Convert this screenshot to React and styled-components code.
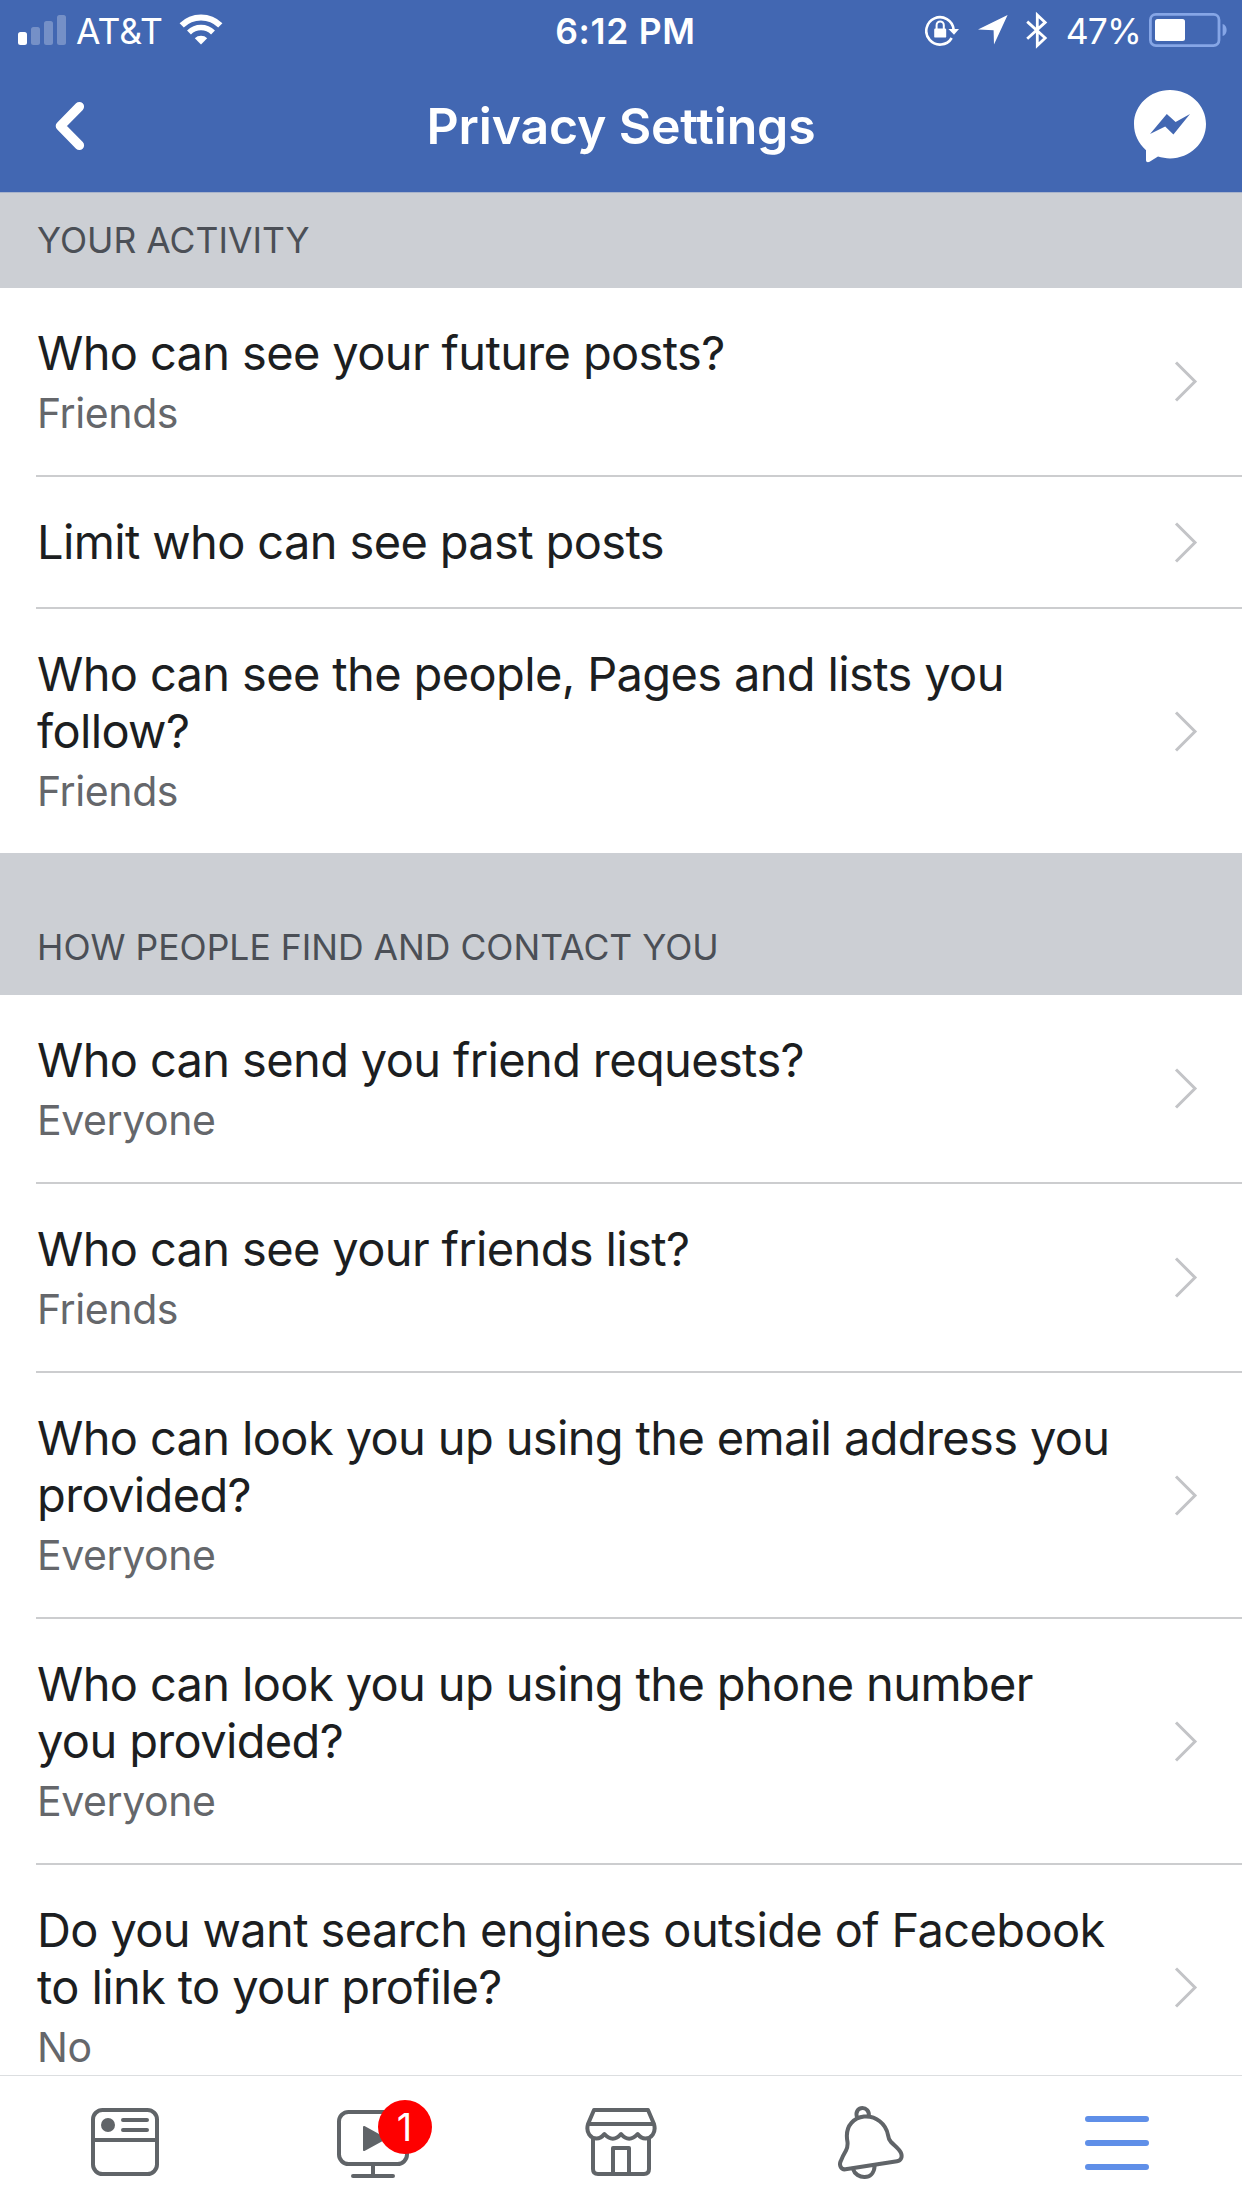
import styled, { createGlobalStyle } from 'styled-components';

const GlobalStyle = createGlobalStyle`
    * {
        box-sizing: border-box;
    }

    body {
        margin: 0;
        background: #fff;
        font-family: Inter, Roboto, sans-serif;
    }
`;

const sections = [
    {
        title: 'YOUR ACTIVITY',
        rows: [
            { title: 'Who can see your future posts?', value: 'Friends' },
            { title: 'Limit who can see past posts' },
            { title: 'Who can see the people, Pages and lists you follow?', value: 'Friends' },
        ],
    },
    {
        title: 'HOW PEOPLE FIND AND CONTACT YOU',
        rows: [
            { title: 'Who can send you friend requests?', value: 'Everyone' },
            { title: 'Who can see your friends list?', value: 'Friends' },
            { title: 'Who can look you up using the email address you provided?', value: 'Everyone' },
            { title: 'Who can look you up using the phone number you provided?', value: 'Everyone' },
            { title: 'Do you want search engines outside of Facebook to link to your profile?', value: 'No' },
        ],
    },
];

const SignalIcon = () => (
    <svg width="50" height="32" viewBox="0 0 50 32" fill="#fff">
        <rect x="1" y="18" width="9" height="13" rx="2.5" />
        <g opacity="0.27">
            <rect x="14" y="13" width="9" height="18" rx="2.5" />
            <rect x="27" y="7" width="9" height="24" rx="2.5" />
            <rect x="40" y="1" width="9" height="30" rx="2.5" />
        </g>
    </svg>
);

const WifiIcon = () => (
    <svg width="44" height="32" viewBox="0 0 44 32" fill="none" stroke="#fff">
        <path d="M2.7 11.3 A27.5 27.5 0 0 1 41.3 11.3" strokeWidth="6" />
        <path d="M10 18.4 A17.3 17.3 0 0 1 34 18.4" strokeWidth="5.6" />
        <path d="M15.8 24.2 A9 9 0 0 1 28.2 24.2 L22 30.6 Z" fill="#fff" stroke="none" />
    </svg>
);

const RotationLockIcon = () => (
    <svg width="35" height="32" viewBox="0 0 35 32" fill="none" stroke="#fff">
        <path d="M26.7 24 A13.7 13.7 0 1 1 28.6 15.5" strokeWidth="2.6" />
        <path d="M23.4 15 H34 L29 20.8 Z" fill="#fff" stroke="none" />
        <rect x="9.2" y="14.6" width="12" height="9" rx="1.2" fill="#fff" stroke="none" />
        <path d="M11.6 15 V11.2 A3.6 3.8 0 0 1 18.8 11.2 V15" strokeWidth="2" />
    </svg>
);

const LocationIcon = () => (
    <svg width="30" height="32" viewBox="0 0 30 32" fill="#fff">
        <path d="M29.6 1 L16 30.6 L15.6 16.2 L0 15.6 Z" />
    </svg>
);

const BluetoothIcon = () => (
    <svg width="22" height="38" viewBox="0 0 22 38" fill="none" stroke="#fff" strokeWidth="2.8">
        <path d="M1.2 10.6 L19.2 27 L11.3 34.4 V4 L19.2 11.4 L1.2 27.8" />
    </svg>
);

const BatteryIcon = () => (
    <svg width="78" height="34" viewBox="0 0 78 34">
        <rect x="1.4" y="1.4" width="68.6" height="31.2" rx="5.5" fill="none" stroke="#86a6e6" strokeWidth="2.8" />
        <rect x="6" y="6" width="30" height="22" rx="2.5" fill="#fff" />
        <path d="M73.6 11 C79 12.4 79 21.6 73.6 23 Z" fill="#86a6e6" />
    </svg>
);

const BackIcon = () => (
    <svg width="30" height="50" viewBox="0 0 30 50" fill="none" stroke="#fff" strokeWidth="9.4" strokeLinecap="round" strokeLinejoin="round">
        <path d="M24.4 5.6 L5.4 25 L24.4 44.4" />
    </svg>
);

const MessengerIcon = () => (
    <svg width="72" height="73" viewBox="0 0 72 73">
        <path d="M36 0 C56 0 72 15 72 34 C72 53 56 68.4 36 68.4 C32 68.4 27.6 67.8 24 66.6 L15.6 71.8 C13.6 72.9 12 72 12 70 V60.2 C4.6 53.6 0 44.6 0 34 C0 15 16 0 36 0 Z" fill="#fff" />
        <path d="M16 44 L32.8 24 L41.6 32 L56 24 L39.4 44.6 L31.2 36.4 Z" fill="#4267b2" />
    </svg>
);

const ChevronIcon = () => (
    <svg width="24" height="42" viewBox="0 0 24 42" fill="none" stroke="#c3c4c7" strokeWidth="3">
        <path d="M2 2.5 L21 21.5 L2 40.5" />
    </svg>
);

const NewsFeedIcon = () => (
    <svg width="68" height="68" viewBox="0 0 68 68" fill="none" stroke="#606468" strokeWidth="4" strokeLinecap="round">
        <rect x="2" y="2" width="64" height="64" rx="9.5" />
        <path d="M2 32 H66 M32 12 H56 M32 22 H56" />
        <circle cx="17" cy="17" r="7" fill="#606468" stroke="none" />
    </svg>
);

const WatchIcon = () => (
    <svg width="72" height="68" viewBox="0 0 72 68" fill="none" stroke="#606468" strokeWidth="4" strokeLinecap="round">
        <rect x="2" y="2" width="68" height="52" rx="9.5" />
        <path d="M36 54 V66 M16 66 H56" />
        <path d="M27 17 L48 28.5 L27 40 Z" fill="#606468" strokeWidth="2" strokeLinejoin="round" />
    </svg>
);

const MarketplaceIcon = () => (
    <svg width="72" height="68" viewBox="0 0 72 68" fill="none" stroke="#606468" strokeWidth="4" strokeLinejoin="round">
        <path d="M9 2 H63 L69 16 C71.5 25 66 30.5 60.5 30.5 Q56 30.5 52.6 26 Q44 35.5 36 26 Q28 35.5 19.4 26 Q16 30.5 11.5 30.5 C6 30.5 0.5 25 3 16 Z" />
        <path d="M3 16 H69" />
        <path d="M8 29 V61 Q8 66 13 66 H59 Q64 66 64 61 V29" />
        <path d="M28 66 V40 H44 V66" />
    </svg>
);

const BellIcon = () => (
    <svg width="66" height="74" viewBox="0 0 66 74" fill="none" stroke="#606468" strokeWidth="4" strokeLinejoin="round">
        <path d="M9.5 36 C6 18 18 11.5 26 10.6 C38 9.5 48 18 50 29 C50.5 33 51 34 53 36 C57 40 61.5 43 63 47 C64.6 51 63 54.5 59 55.2 L7.5 63.3 C3 64 1 59 2.6 55.4 C4 52 6 48 8 44.6 C9.6 41.5 9.8 39 9.5 36 Z" />
        <path d="M19 11.5 C17 5 21 2 24.4 2 C28 2 31.4 5 30.8 9.5" />
        <path d="M15 63 C18 73.4 36 75 36.6 60" />
    </svg>
);

const MenuIcon = () => (
    <svg width="64" height="54" viewBox="0 0 64 54" stroke="#5f8fe8" strokeWidth="6" strokeLinecap="round">
        <path d="M3 3 H61 M3 27 H61 M3 51 H61" />
    </svg>
);

const App = () => {
    return (
        <Screen>
            <GlobalStyle />
            <Header>
                <StatusBar>
                    <StatusGroup>
                        <SignalIcon />
                        <Carrier>AT&amp;T</Carrier>
                        <WifiIcon />
                    </StatusGroup>
                    <Clock>6:12 PM</Clock>
                    <StatusGroup $end>
                        <StatusIcons>
                            <RotationLockIcon />
                            <LocationIcon />
                            <BluetoothIcon />
                        </StatusIcons>
                        <Percent>47%</Percent>
                        <BatteryIcon />
                    </StatusGroup>
                </StatusBar>
                <TitleBar>
                    <BackButton><BackIcon /></BackButton>
                    <Title>Privacy Settings</Title>
                    <MessengerButton><MessengerIcon /></MessengerButton>
                </TitleBar>
            </Header>
            <Content>
                {sections.map((section, index) => (
                    <section key={section.title}>
                        <SectionHeader $first={index === 0}>{section.title}</SectionHeader>
                        <List>
                            {section.rows.map((row) => (
                                <Row key={row.title}>
                                    <RowText>
                                        <RowTitle>{row.title}</RowTitle>
                                        {row.value && <RowValue>{row.value}</RowValue>}
                                    </RowText>
                                    <ChevronIcon />
                                </Row>
                            ))}
                        </List>
                    </section>
                ))}
            </Content>
            <TabBar>
                <Tab $left={2}><NewsFeedIcon /></Tab>
                <Tab $top={4}>
                    <TabIcon>
                        <WatchIcon />
                        <Badge>1</Badge>
                    </TabIcon>
                </Tab>
                <Tab><MarketplaceIcon /></Tab>
                <Tab $left={3} $top={1}><BellIcon /></Tab>
                <Tab $right={2} $top={2}><MenuIcon /></Tab>
            </TabBar>
        </Screen>
    );
};

const Screen = styled.div`
    display: flex;
    flex-direction: column;
    width: 1242px;
    height: 2208px;
    overflow: hidden;
    background: #fff;

    svg {
        display: block;
        flex: none;
    }
`;

const Header = styled.header`
    flex: none;
    height: 192px;
    background: #4267b2;
    color: #fff;
`;

const StatusBar = styled.div`
    display: grid;
    grid-template-columns: 1fr auto 1fr;
    align-items: center;
    height: 60px;
    padding: 0 15px 0 17px;
`;

const StatusGroup = styled.div`
    display: flex;
    align-items: center;
    justify-content: ${(props) => (props.$end ? 'flex-end' : 'flex-start')};
`;

const StatusIcons = styled.div`
    display: flex;
    align-items: center;
    gap: 18px;
`;

const Carrier = styled.span`
    margin: 3px 16px 0 9px;
    font-size: 35.5px;
    line-height: 44px;
`;

const Clock = styled.span`
    margin: 3px 0 0 7px;
    font-size: 35.5px;
    font-weight: 600;
    line-height: 44px;
    letter-spacing: 0.7px;
`;

const Percent = styled.span`
    margin: 3px 8px 0 18px;
    font-size: 35.5px;
    line-height: 44px;
    letter-spacing: -0.9px;
`;

const TitleBar = styled.div`
    display: grid;
    grid-template-columns: 160px 1fr 160px;
    align-items: center;
    height: 132px;
`;

const BackButton = styled.button`
    padding: 0 0 0 55px;
    border: none;
    background: none;
`;

const Title = styled.h1`
    margin: 0;
    font-size: 50px;
    font-weight: 600;
    line-height: 60px;
    letter-spacing: -0.18px;
    text-align: center;
`;

const MessengerButton = styled.button`
    padding: 0 0 0 52px;
    border: none;
    background: none;
`;

const Content = styled.main`
    flex: 1;
    min-height: 0;
    overflow: hidden;
`;

const SectionHeader = styled.h2`
    display: flex;
    align-items: flex-end;
    height: ${(props) => (props.$first ? 96 : 142)}px;
    margin: 0;
    padding: 0 37px 25px;
    border-top: ${(props) => (props.$first ? '1px solid #a9b4cb' : 'none')};
    background: #cccfd4;
    color: #4b4f56;
    font-size: 35.5px;
    font-weight: 400;
    line-height: 44px;
`;

const List = styled.div`
    padding-left: 36px;
`;

const Row = styled.div`
    display: flex;
    align-items: center;
    justify-content: space-between;
    padding: 36px 44px 37px 1px;

    & + & {
        border-top: 2px solid #cccdcf;
    }
`;

const RowText = styled.div`
    width: 1085px;
`;

const RowTitle = styled.div`
    color: #1c1e21;
    font-size: 47px;
    line-height: 57px;
    letter-spacing: -0.64px;
`;

const RowValue = styled.div`
    margin-top: 7px;
    color: #65676b;
    font-size: 41px;
    line-height: 50px;
    letter-spacing: -0.4px;
`;

const TabBar = styled.nav`
    display: grid;
    grid-template-columns: repeat(5, 1fr);
    flex: none;
    height: 133px;
    border-top: 1px solid #dcdee0;
    background: #fff;
`;

const Tab = styled.div`
    display: flex;
    align-items: center;
    justify-content: center;
    padding: ${(props) => props.$top || 0}px ${(props) => props.$right || 0}px 0 ${(props) => props.$left || 0}px;
`;

const TabIcon = styled.div`
    position: relative;
`;

const Badge = styled.span`
    position: absolute;
    top: -10px;
    left: 41px;
    width: 54px;
    height: 54px;
    border-radius: 50%;
    background: #fe0000;
    color: #fff;
    font-size: 38px;
    line-height: 54px;
    text-align: center;
`;

export default App;
